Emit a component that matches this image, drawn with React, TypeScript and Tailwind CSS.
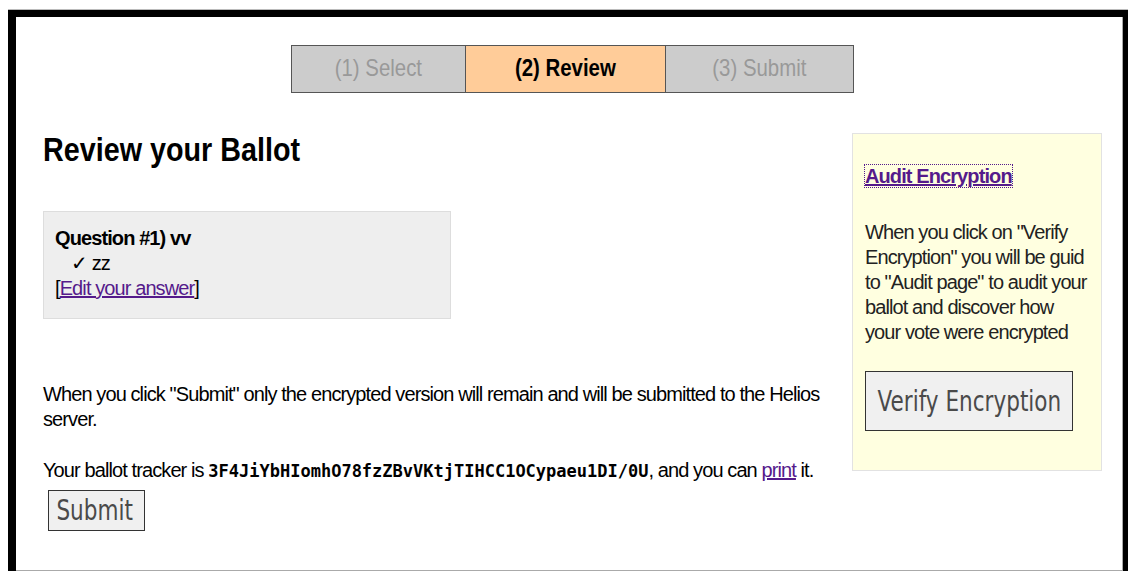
import React from "react";

const SANS = { fontFamily: '"Liberation Sans", Arial, sans-serif' };
const BTN = { fontFamily: '"DejaVu Sans", sans-serif' };

const STEPS = [
  { label: "(1) Select", width: "w-[175px]", active: false },
  { label: "(2) Review", width: "w-[200px]", active: true },
  { label: "(3) Submit", width: "w-[188px]", active: false },
];

function StepBar() {
  return (
    <div className="flex pl-[275px] pt-[28px]">
      {STEPS.map((s, i) => (
        <div
          key={s.label}
          className={`${s.width} h-[48px] flex items-center justify-center border border-[#555] text-[24px] ${
            i > 0 ? "border-l-0" : ""
          } ${s.active ? "bg-[#ffcc99] font-bold text-black" : "bg-[#cccccc] text-[#999]"}`}
        >
          <span className="inline-block scale-x-[0.85] -translate-y-[1px]">{s.label}</span>
        </div>
      ))}
    </div>
  );
}

export default function App() {
  return (
    <div className="h-[572px] w-[1128px] overflow-hidden bg-white pt-[9px] pl-[8px]" style={SANS}>
      <div className="bg-black border-t border-[#bbb] pt-[7px] pl-[8px] pr-[6px] w-[1130px]">
        <div className="bg-white border-r border-b border-[#aaa] h-[554px] w-[1107px] text-black">
          <StepBar />

          <div className="flex">
            {/* ballot column */}
            <div className="w-[836px] pl-[27px] text-[20px] leading-[25px] tracking-[-0.045em]">
              <h1 className="mt-[37px] text-[34px] leading-[38px] font-bold tracking-normal">
                <span className="inline-block origin-left scale-x-[0.845]">Review your Ballot</span>
              </h1>

              <div className="mt-[43px] w-[408px] h-[108px] bg-[#eeeeee] border border-[#dddddd] pl-[11px] pt-[14px]">
                <div className="font-bold">Question #1) vv</div>
                <div className="pl-[16px]">✓ zz</div>
                <div>
                  [<a href="#" className="text-[#551a8b] underline">Edit your answer</a>]
                </div>
              </div>

              <p className="mt-[63px] pr-[4px]">
                When you click "Submit" only the encrypted version will remain and will be submitted to the Helios
                server.
              </p>

              <p className="mt-[26px] whitespace-nowrap">
                Your ballot tracker is{" "}
                <span
                  className="font-bold text-[17px] tracking-normal"
                  style={{ fontFamily: '"DejaVu Sans Mono", monospace' }}
                >
                  3F4JiYbHIomhO78fzZBvVKtjTIHCC1OCypaeu1DI/0U
                </span>
                , and you can <a href="#" className="text-[#551a8b] underline">print</a> it.
              </p>

              <button
                className="mt-[6px] ml-[5px] w-[97px] h-[41px] flex items-center justify-center bg-[#f0f0f0] border border-[#333] text-[28px] text-[#4a4a4a] tracking-normal"
                style={BTN}
              >
                <span className="inline-block scale-x-[0.77] -translate-x-[2px]">Submit</span>
              </button>
            </div>

            {/* audit sidebar */}
            <div className="mt-[40px] w-[250px] h-[338px] bg-[#ffffe0] border border-[#e2e2e2] px-[12px] pt-[30px] text-[20px] leading-[25px] tracking-[-0.045em]">
              <a
                href="#"
                className="font-bold text-[#551a8b] underline outline outline-1 outline-dotted outline-[#551a8b]"
              >
                Audit Encryption
              </a>
              <p className="mt-[31px] text-[#222] whitespace-nowrap">
                When you click on "Verify
                <br />
                Encryption" you will be guid
                <br />
                to "Audit page" to audit your
                <br />
                ballot and discover how
                <br />
                your vote were encrypted
              </p>
              <button
                className="mt-[26px] w-[208px] h-[60px] flex items-center justify-center bg-[#f0f0f0] border border-[#333] text-[28px] text-[#4a4a4a] tracking-normal"
                style={BTN}
              >
                <span className="inline-block shrink-0 scale-x-[0.77] whitespace-nowrap">Verify Encryption</span>
              </button>
            </div>
          </div>
        </div>
      </div>
    </div>
  );
}
